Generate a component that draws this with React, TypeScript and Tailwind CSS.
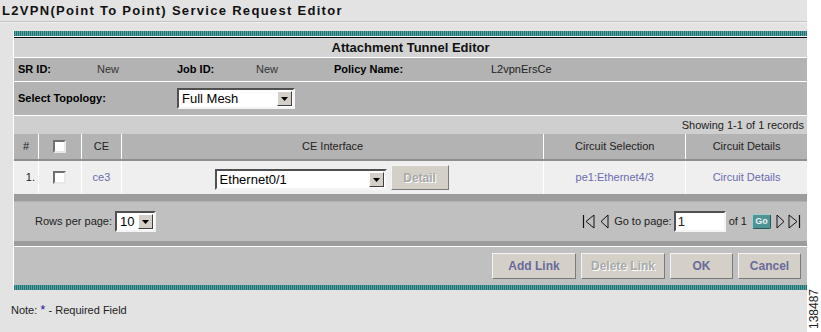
import type { ReactNode } from "react";

const teal =
  "h-[5px] bg-[repeating-linear-gradient(90deg,#1d7373_0px,#1d7373_1px,#5f9f9f_1px,#5f9f9f_2px)]";

function Select({ value, width, height }: { value: string; width: string; height: string }) {
  return (
    <div
      className={`flex ${width} ${height} border-2 border-t-[#505050] border-l-[#505050] border-b-[#f4f4f4] border-r-[#f4f4f4] bg-white`}
    >
      <div className="flex flex-1 items-center pl-[3px] text-[13px] leading-none text-black">{value}</div>
      <div className="m-px flex w-[15px] items-center justify-center border border-t-white border-l-white border-b-[#404040] border-r-[#404040] bg-[#d4d0c8]">
        <svg width="7" height="4" viewBox="0 0 7 4">
          <path d="M0 0 L7 0 L3.5 4 Z" fill="#000" />
        </svg>
      </div>
    </div>
  );
}

function Checkbox() {
  return (
    <div className="h-[13px] w-[13px] border-2 border-t-[#707070] border-l-[#707070] border-b-[#e8e8e8] border-r-[#e8e8e8] bg-white" />
  );
}

function Button({ children, w, h = "h-[26px]", disabled }: { children: ReactNode; w: string; h?: string; disabled?: boolean }) {
  return (
    <div
      className={`flex ${w} ${h} items-center justify-center border border-t-[#f4f4f4] border-l-[#f4f4f4] border-b-[#7a7a7a] border-r-[#7a7a7a] bg-[#d4d0c8] text-[12px] font-bold ${
        disabled ? "text-[#a8a8a8] [text-shadow:1px_1px_0_#fff]" : "text-[#6a6a9a]"
      }`}
    >
      {children}
    </div>
  );
}

function Cell({ children, w, className = "" }: { children?: ReactNode; w: string; className?: string }) {
  return <div className={`flex ${w} items-center justify-center border-l border-white ${className}`}>{children}</div>;
}

export default function App() {
  return (
    <div className="flex h-[332px] w-[821px] font-['Liberation_Sans',Arial,sans-serif] text-[11px] text-black">
      <div className="flex w-[807px] flex-col bg-[#e3e3e3]">
        {/* page title */}
        <div className="flex h-[21px] items-center pl-[2px] text-[13px] font-bold tracking-[1.3px] text-[#111]">
          L2VPN(Point To Point) Service Request Editor
        </div>
        <div className="h-px bg-[#c4c4c4]" />
        <div className="h-px bg-[#f0f0f0]" />

        <div className="ml-[13px] mt-[8px] flex w-[794px] flex-col border-l border-white">
          <div className={teal} />
          <div className="h-px bg-white" />
          <div className="h-px bg-black" />
          <div className="flex h-[19px] items-center justify-center bg-[#d4d4d4] text-[13px] font-bold text-[#111]">
            Attachment Tunnel Editor
          </div>
          <div className="h-px bg-white" />

          {/* SR info */}
          <div className="flex h-[23px] items-center bg-[#b3b3b3]">
            <span className="w-[83px] pl-[4px] font-bold">SR ID:</span>
            <span className="w-[80px] text-[#333]">New</span>
            <span className="w-[79px] font-bold">Job ID:</span>
            <span className="w-[78px] text-[#333]">New</span>
            <span className="w-[157px] font-bold">Policy Name:</span>
            <span className="text-[#222]">L2vpnErsCe</span>
          </div>
          <div className="h-px bg-white" />

          <div className="flex h-[33px] items-center bg-[#b3b3b3]">
            <span className="w-[163px] pl-[4px] font-bold">Select Topology:</span>
            <Select value="Full Mesh" width="w-[118px]" height="h-[21px]" />
          </div>
          <div className="h-px bg-white" />

          <div className="flex h-[18px] items-center justify-end bg-[#cfcfcf] pr-[3px] text-[#222]">
            Showing 1-1 of 1 records
          </div>

          {/* table header */}
          <div className="flex h-[25px] bg-[#b3b3b3] text-[#222]">
            <Cell w="w-[24px]" className="border-l-0">#</Cell>
            <Cell w="w-[43px]">
              <Checkbox />
            </Cell>
            <Cell w="w-[40px]">CE</Cell>
            <Cell w="w-[423px]">CE Interface</Cell>
            <Cell w="w-[142px]">Circuit Selection</Cell>
            <Cell w="w-[122px]">Circuit Details</Cell>
          </div>
          <div className="h-[2px] bg-[#8e8e8e]" />

          {/* data row */}
          <div className="flex h-[33px] bg-[#efefef]">
            <Cell w="w-[24px]" className="justify-end border-l-0 pr-[3px] text-[#222]">1.</Cell>
            <Cell w="w-[43px]">
              <Checkbox />
            </Cell>
            <Cell w="w-[40px]" className="text-[#6a6ab0]">ce3</Cell>
            <Cell w="w-[423px]" className="items-end! gap-[4px] pb-[4px] pr-[2px]">
              <Select value="Ethernet0/1" width="w-[172px]" height="h-[21px]" />
              <Button w="w-[58px]" h="h-[25px]" disabled>
                Detail
              </Button>
            </Cell>
            <Cell w="w-[142px]" className="text-[#6a6ab0]">pe1:Ethernet4/3</Cell>
            <Cell w="w-[122px]" className="text-[#6a6ab0]">Circuit Details</Cell>
          </div>
          <div className="h-[7px] bg-[#9c9c9c]" />
          <div className="h-px bg-[#b0b0b0]" />

          {/* pagination */}
          <div className="flex h-[39px] items-center justify-between bg-[#c0c0c0] pl-[21px] pr-[6px] text-[#222]">
            <div className="flex items-center gap-[3px]">
              <span>Rows per page:</span>
              <Select value="10" width="w-[41px]" height="h-[21px]" />
            </div>
            <div className="flex items-center">
              <svg width="13" height="15" viewBox="0 0 13 15" className="mr-[5px]">
                <path d="M1.5 1 V14" stroke="#111" strokeWidth="1.2" />
                <path d="M12 1 L4 7.5 L12 14 Z" stroke="#111" fill="none" />
              </svg>
              <svg width="9" height="15" viewBox="0 0 9 15" className="mr-[5px]">
                <path d="M8 1 L1 7.5 L8 14 Z" stroke="#111" fill="none" />
              </svg>
              <span>Go to page:</span>
              <div className="ml-[2px] h-[21px] w-[52px] border-2 border-t-[#505050] border-l-[#505050] border-b-[#f4f4f4] border-r-[#f4f4f4] bg-white pl-[2px] text-[13px] leading-[17px]">
                1
              </div>
              <span className="ml-[3px]">of 1</span>
              <div className="ml-[5px] flex h-[15px] w-[19px] items-center justify-center rounded-[2px] border border-t-[#9fd0d0] border-l-[#9fd0d0] border-b-[#2a5a5a] border-r-[#2a5a5a] bg-[#4f9494] text-[9px] font-bold text-[#e8f4f4]">
                Go
              </div>
              <svg width="9" height="15" viewBox="0 0 9 15" className="ml-[5px]">
                <path d="M1 1 L8 7.5 L1 14 Z" stroke="#111" fill="none" />
              </svg>
              <svg width="13" height="15" viewBox="0 0 13 15" className="ml-[3px]">
                <path d="M1 1 L9 7.5 L1 14 Z" stroke="#111" fill="none" />
                <path d="M11.5 1 V14" stroke="#111" strokeWidth="1.2" />
              </svg>
            </div>
          </div>
          <div className="h-[5px] bg-[#9c9c9c]" />
          <div className="h-px bg-white" />

          {/* actions */}
          <div className="flex h-[38px] items-center justify-end gap-[5px] bg-[#c0c0c0] pr-[6px]">
            <Button w="w-[84px]">Add Link</Button>
            <Button w="w-[84px]" disabled>
              Delete Link
            </Button>
            <Button w="w-[63px]">OK</Button>
            <Button w="w-[63px]">Cancel</Button>
          </div>
          <div className={teal} />
        </div>

        <div className="mt-[10px] pl-[11px] text-[#222]">
          Note: <span className="text-[13px] text-[#1a1aa0]">*</span> - Required Field
        </div>
      </div>

      <div className="flex w-[14px] items-end justify-center bg-white pb-[3px]">
        <span className="rotate-180 text-[12px] leading-none text-[#222] [writing-mode:vertical-rl]">138487</span>
      </div>
    </div>
  );
}
